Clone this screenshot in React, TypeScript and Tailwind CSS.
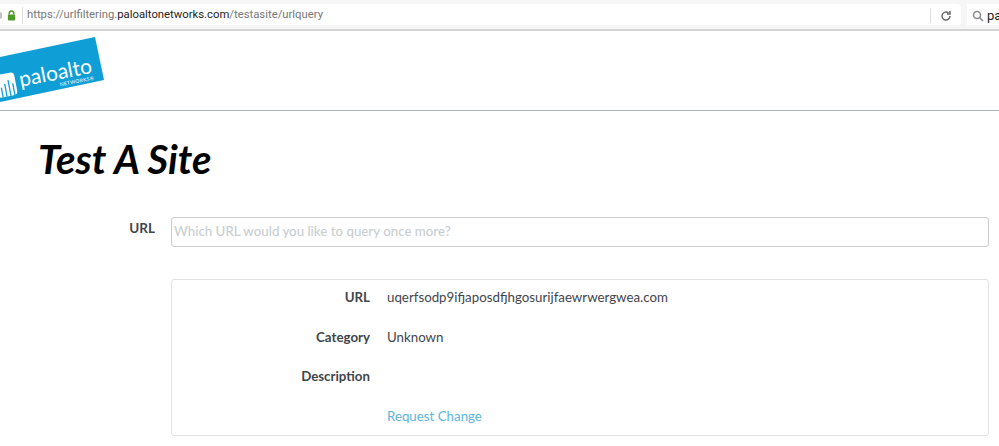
import React from "react";

function Logo() {
  return (
    <svg width="110" height="72" viewBox="0 0 110 72" className="block">
      <polygon points="-5,27 95,6 104,49 -5,72" fill="#0f9ed5" />
      <g transform="rotate(-11 50 45)" fill="#ffffff">
        <rect x="-5" y="34" width="20" height="23" rx="4" />
        <g stroke="#0f9ed5" strokeWidth="1.3">
          <line x1="0" y1="57" x2="0" y2="47" />
          <line x1="4" y1="57" x2="4" y2="44" />
          <line x1="8" y1="57" x2="8" y2="41" />
          <line x1="12" y1="57" x2="12" y2="45" />
        </g>
        <text x="19" y="50" fontFamily="Lato, sans-serif" fontSize="21" fill="#ffffff">paloalto</text>
        <text x="58" y="57" fontFamily="Lato, sans-serif" fontSize="5" letterSpacing="0.3" fill="#ffffff">NETWORKS®</text>
      </g>
    </svg>
  );
}

function Row({ label, children }: { label: string; children?: React.ReactNode }) {
  return (
    <div className="flex h-[39.5px] pt-[7px] text-[13.3px] leading-[20px] text-[#3f454c]">
      <div className="w-[198px] text-right font-bold">{label}</div>
      <div className="ml-[17px]">{children}</div>
    </div>
  );
}

export default function App() {
  return (
    <div className="h-[446px] w-[999px] overflow-hidden bg-white font-['Lato',sans-serif]">
      {/* browser toolbar */}
      <div className="flex h-[31px] items-start gap-[6px] border-b-2 border-[#d4d4d4] bg-[#f6f6f6] pt-[4px]">
        <div className="flex h-[21px] flex-1 items-center rounded-r-sm bg-white pt-[2px] font-['Roboto',sans-serif] text-[11.3px] text-[#777]">
          <div className="mr-[5px] h-[7px] w-[2px] rounded-r-sm bg-[#c4c4c4]" />
          <svg width="9" height="11" viewBox="0 0 10 12" className="mr-[6px] shrink-0">
            <path d="M2.5 5V3.5a2.5 2.5 0 0 1 5 0V5" fill="none" stroke="#4e9a26" strokeWidth="1.6" />
            <rect x="1" y="5" width="8" height="6.5" rx="1" fill="#4e9a26" />
          </svg>
          <div className="mr-[4px] h-[17px] w-px bg-[#ddd]" />
          <span>https://urlfiltering.</span>
          <span className="text-[#222]">paloaltonetworks.com</span>
          <span>/testasite/urlquery</span>
          <div className="ml-auto h-[15px] w-px bg-[#ddd]" />
          <svg width="12" height="12" viewBox="0 0 24 24" fill="none" stroke="#666" strokeWidth="3" className="mx-[9px] shrink-0">
            <path d="M20 12a8 8 0 1 1-3-6.2" />
            <path d="M20 2v6h-6" />
          </svg>
        </div>
        <div className="flex h-[21px] w-[32px] shrink-0 items-center gap-[3px] overflow-hidden bg-white pl-[5px] pt-[2px] font-['Roboto',sans-serif] text-[13px] text-[#222]">
          <svg width="12" height="12" viewBox="0 0 24 24" fill="none" stroke="#888" strokeWidth="3" className="shrink-0">
            <circle cx="10" cy="10" r="7" />
            <path d="M15 15l7 7" />
          </svg>
          <span>pa</span>
        </div>
      </div>

      {/* page header */}
      <div className="h-[80px] border-b border-[#a9b5bd]">
        <Logo />
      </div>

      <div className="pl-[38px] pr-[10px]">
        <h1 className="mt-[23px] text-[40px] leading-[50px] font-bold italic text-black">Test A Site</h1>

        <div className="mt-[33px] flex">
          <div className="w-[117px] pt-[1px] text-right text-[13.5px] leading-[20px] font-bold text-[#3f454c]">URL</div>
          <input
            className="ml-[16px] h-[30px] flex-1 rounded-[3px] border border-[#ccc] px-[2px] pb-[3px] text-[13.3px] font-medium placeholder:text-[#c9ced0]"
            placeholder="Which URL would you like to query once more?"
          />
        </div>

        <div className="mt-[32px] ml-[133px] h-[157px] rounded-[3px] border border-[#e3e3e3]">
          <Row label="URL">uqerfsodp9ifjaposdfjhgosurijfaewrwergwea.com</Row>
          <Row label="Category">Unknown</Row>
          <Row label="Description" />
          <Row label="">
            <span className="text-[#5bb4dc]">Request Change</span>
          </Row>
        </div>
      </div>
    </div>
  );
}
